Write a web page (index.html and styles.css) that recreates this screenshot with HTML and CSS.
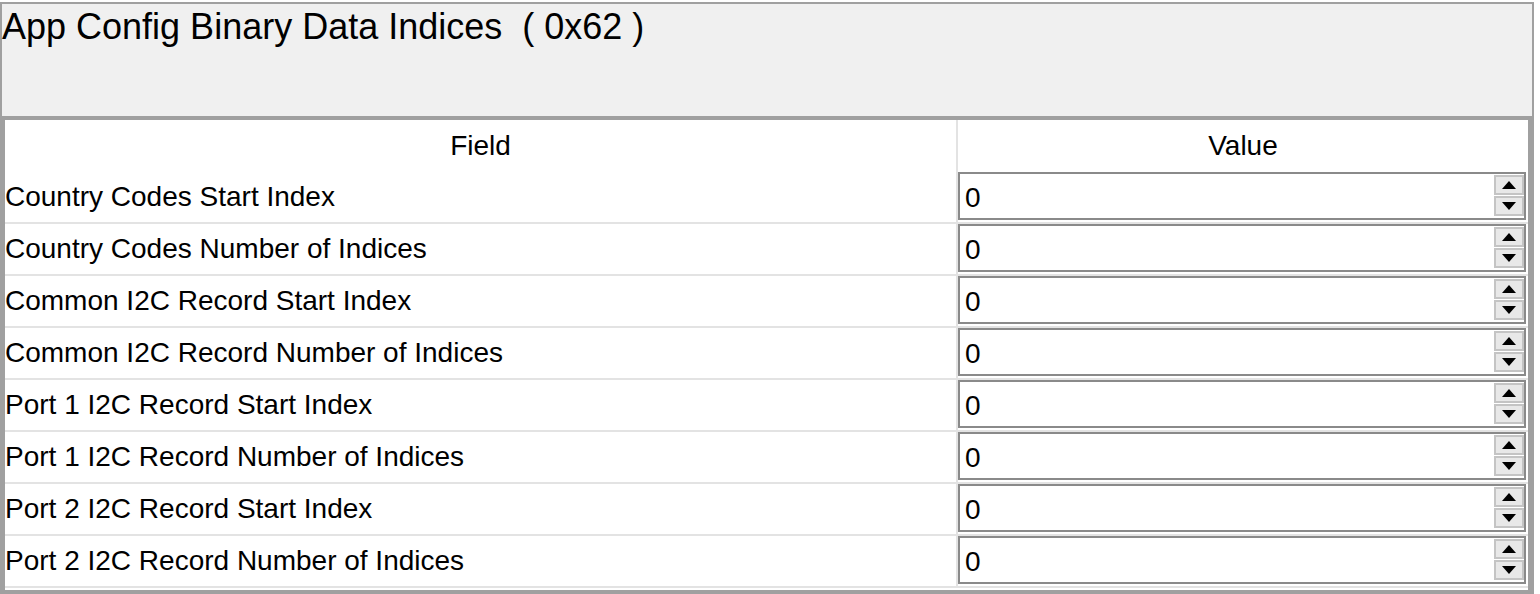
FILE: index.html
```html
<!DOCTYPE html>
<html>
<head>
<meta charset="utf-8">
<link rel="stylesheet" href="styles.css">
</head>
<body>
<div class="frame">
  <div class="title-panel">
    <div class="title">App Config Binary Data Indices&nbsp; ( 0x62 )</div>
  </div>
  <div class="scroll">
    <div class="table">
      <div class="hcell field-col">Field</div>
      <div class="hcell">Value</div>

      <div class="cell label field-col">Country Codes Start Index</div>
      <div class="cell value"><div class="spinner"><div class="num">0</div><div class="btns"><div class="btn"><svg width="14" height="8" viewBox="0 0 14 8"><polygon points="0,8 7,0 14,8" fill="#000"/></svg></div><div class="btn"><svg width="14" height="8" viewBox="0 0 14 8"><polygon points="0,0 14,0 7,8" fill="#000"/></svg></div></div></div></div>

      <div class="cell label field-col">Country Codes Number of Indices</div>
      <div class="cell value"><div class="spinner"><div class="num">0</div><div class="btns"><div class="btn"><svg width="14" height="8" viewBox="0 0 14 8"><polygon points="0,8 7,0 14,8" fill="#000"/></svg></div><div class="btn"><svg width="14" height="8" viewBox="0 0 14 8"><polygon points="0,0 14,0 7,8" fill="#000"/></svg></div></div></div></div>

      <div class="cell label field-col">Common I2C Record Start Index</div>
      <div class="cell value"><div class="spinner"><div class="num">0</div><div class="btns"><div class="btn"><svg width="14" height="8" viewBox="0 0 14 8"><polygon points="0,8 7,0 14,8" fill="#000"/></svg></div><div class="btn"><svg width="14" height="8" viewBox="0 0 14 8"><polygon points="0,0 14,0 7,8" fill="#000"/></svg></div></div></div></div>

      <div class="cell label field-col">Common I2C Record Number of Indices</div>
      <div class="cell value"><div class="spinner"><div class="num">0</div><div class="btns"><div class="btn"><svg width="14" height="8" viewBox="0 0 14 8"><polygon points="0,8 7,0 14,8" fill="#000"/></svg></div><div class="btn"><svg width="14" height="8" viewBox="0 0 14 8"><polygon points="0,0 14,0 7,8" fill="#000"/></svg></div></div></div></div>

      <div class="cell label field-col">Port 1 I2C Record Start Index</div>
      <div class="cell value"><div class="spinner"><div class="num">0</div><div class="btns"><div class="btn"><svg width="14" height="8" viewBox="0 0 14 8"><polygon points="0,8 7,0 14,8" fill="#000"/></svg></div><div class="btn"><svg width="14" height="8" viewBox="0 0 14 8"><polygon points="0,0 14,0 7,8" fill="#000"/></svg></div></div></div></div>

      <div class="cell label field-col">Port 1 I2C Record Number of Indices</div>
      <div class="cell value"><div class="spinner"><div class="num">0</div><div class="btns"><div class="btn"><svg width="14" height="8" viewBox="0 0 14 8"><polygon points="0,8 7,0 14,8" fill="#000"/></svg></div><div class="btn"><svg width="14" height="8" viewBox="0 0 14 8"><polygon points="0,0 14,0 7,8" fill="#000"/></svg></div></div></div></div>

      <div class="cell label field-col">Port 2 I2C Record Start Index</div>
      <div class="cell value"><div class="spinner"><div class="num">0</div><div class="btns"><div class="btn"><svg width="14" height="8" viewBox="0 0 14 8"><polygon points="0,8 7,0 14,8" fill="#000"/></svg></div><div class="btn"><svg width="14" height="8" viewBox="0 0 14 8"><polygon points="0,0 14,0 7,8" fill="#000"/></svg></div></div></div></div>

      <div class="cell label field-col">Port 2 I2C Record Number of Indices</div>
      <div class="cell value"><div class="spinner"><div class="num">0</div><div class="btns"><div class="btn"><svg width="14" height="8" viewBox="0 0 14 8"><polygon points="0,8 7,0 14,8" fill="#000"/></svg></div><div class="btn"><svg width="14" height="8" viewBox="0 0 14 8"><polygon points="0,0 14,0 7,8" fill="#000"/></svg></div></div></div></div>
    </div>
  </div>
</div>
</body>
</html>
```
FILE: styles.css
```css
* { box-sizing: border-box; }

html, body {
  margin: 0;
  padding: 0;
  background: #ffffff;
}

body {
  padding-top: 2px;
  font-family: "Liberation Sans", Arial, sans-serif;
  color: #000;
}

.frame {
  width: 1534px;
  border: 2px solid #a0a0a0;
  border-bottom: none;
  display: flex;
  flex-direction: column;
}

.title-panel {
  height: 113px;
  background: #f0f0f0;
  border-bottom: 1px solid #a0a0a0;
  padding-top: 2px;
}

.title {
  font-size: 36px;
  line-height: normal;
  white-space: pre;
}

.scroll {
  border-top: 3px solid #a0a0a0;
  border-left: 3px solid #a0a0a0;
  border-right: 4px solid #a0a0a0;
  border-bottom: 4px solid #a0a0a0;
  height: 477px;
  background: #fff;
}

.table {
  display: grid;
  grid-template-columns: 953px 570px;
  grid-auto-rows: 52px;
}

.field-col {
  border-right: 2px solid #e3e3e3;
}

.hcell {
  font-size: 28px;
  line-height: 52px;
  text-align: center;
}

.cell {
  border-bottom: 2px solid #e3e3e3;
}

.label {
  font-size: 28px;
  line-height: 49px;
  white-space: nowrap;
}

.value {
  padding-right: 2px;
}

.spinner {
  height: 48px;
  border: 2px solid #8a8a8a;
  background: #fff;
  display: flex;
}

.num {
  flex: 1;
  font-size: 28px;
  line-height: 40px;
  padding-top: 4px;
  padding-left: 5px;
}

.btns {
  width: 30px;
  padding-top: 1px;
  display: flex;
  flex-direction: column;
  gap: 1px;
}

.btn {
  height: 20px;
  background: #e8e8e8;
  border: 2px solid #c4c4c4;
  display: flex;
  align-items: center;
  justify-content: center;
}

.btn svg {
  display: block;
}
```
